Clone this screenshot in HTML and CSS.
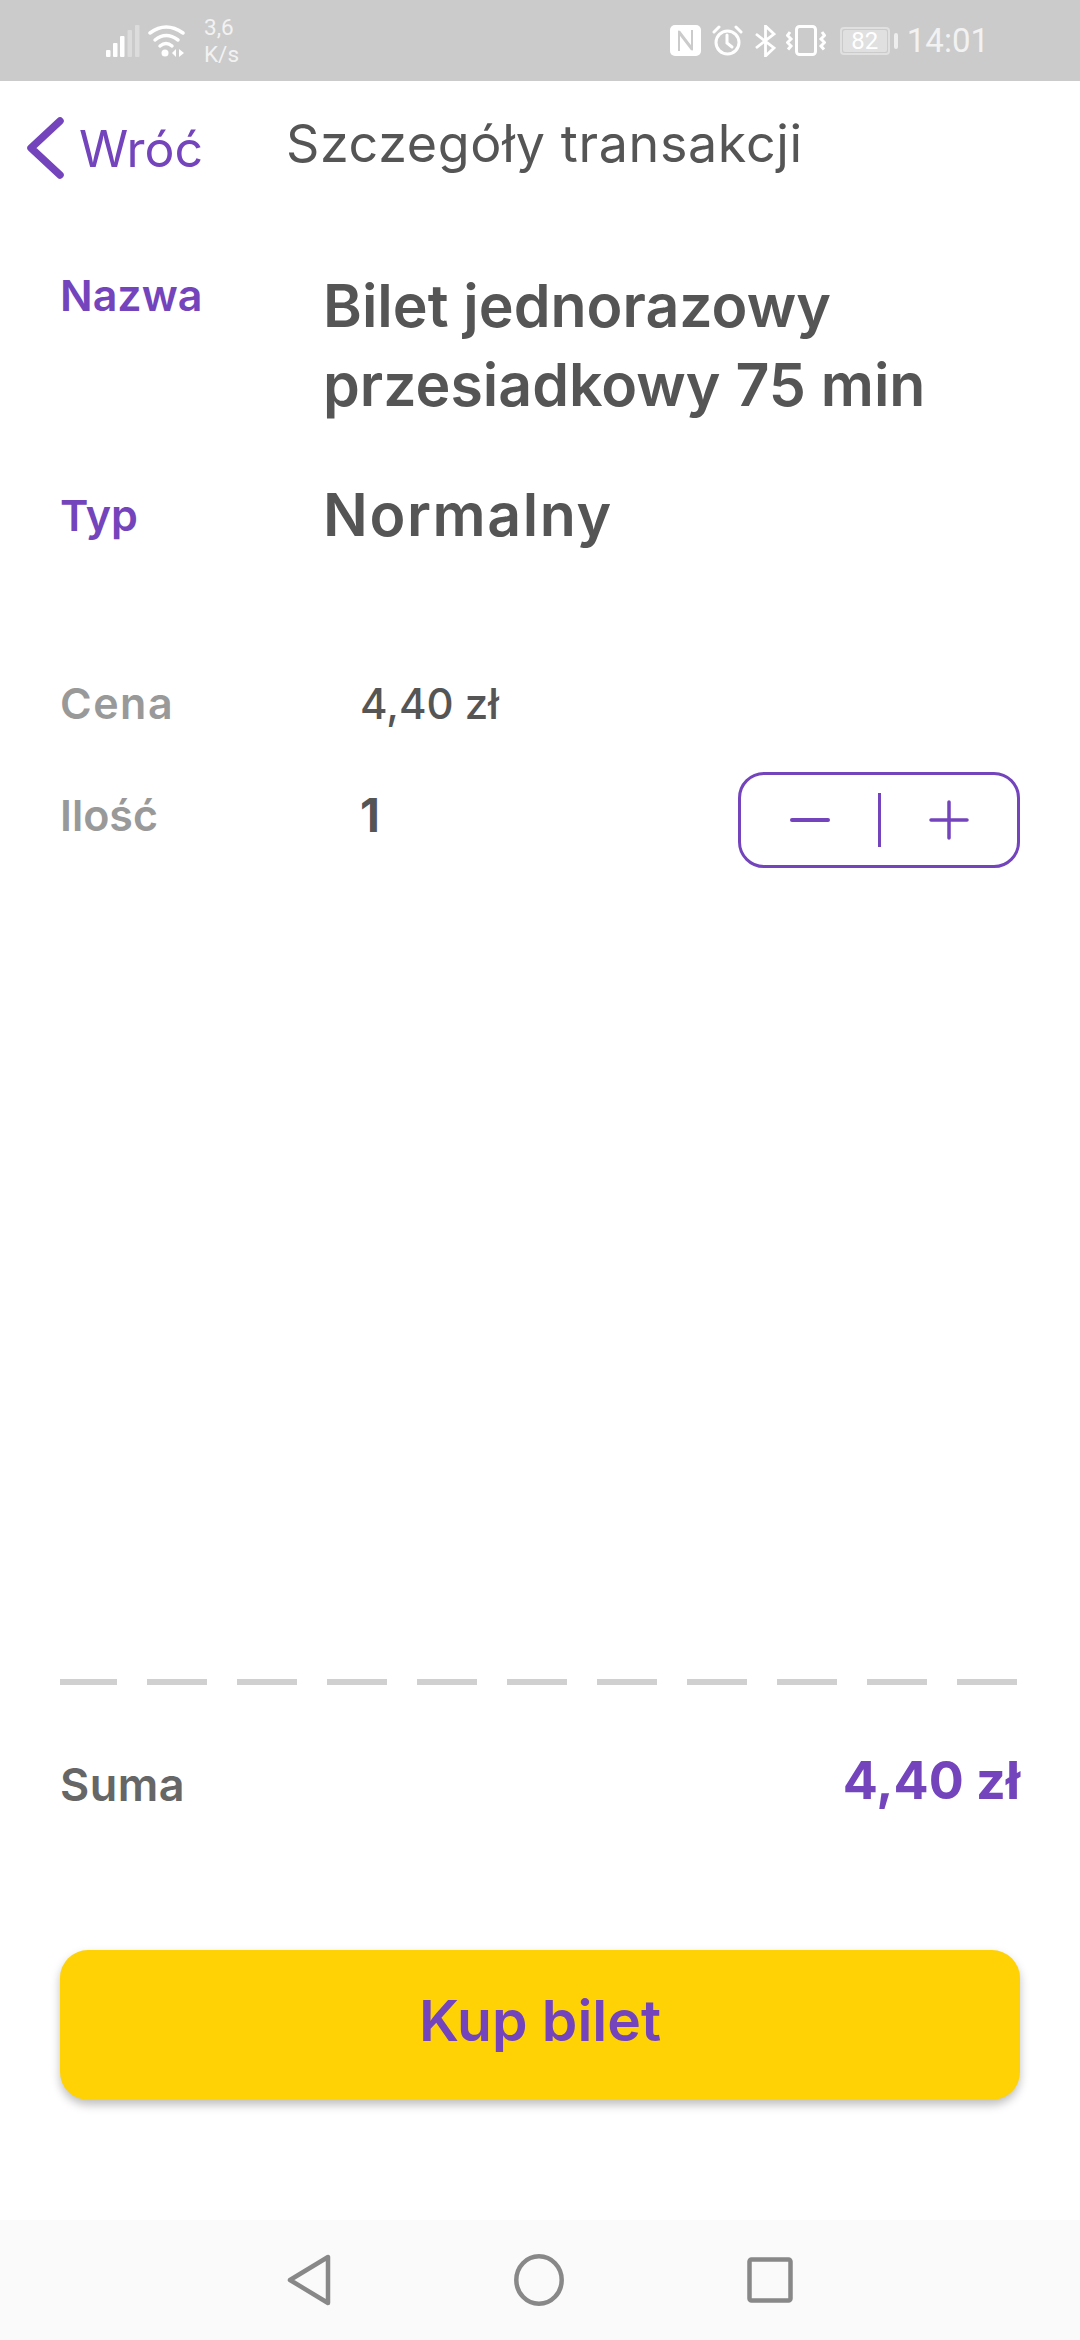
FILE: index.html
```html
<!DOCTYPE html>
<html lang="pl">
<head>
    <meta charset="UTF-8">
    <meta name="viewport" content="width=device-width, initial-scale=1.0">
    <title>Szczegóły transakcji</title>
    <link rel="stylesheet" href="styles.css">
</head>
<body>
    <div class="status-bar">
        <div class="status-left">
            <svg width="34" height="32" viewBox="0 0 34 32">
                <rect x="0" y="25" width="4.500" height="7" rx="1" fill="#fff"/>
                <rect x="7" y="18" width="4.500" height="14" rx="1" fill="#fff"/>
                <rect x="14" y="11" width="4.500" height="21" rx="1" fill="#fff"/>
                <rect x="21.500" y="5" width="4.500" height="27" rx="1" fill="#dcdcdc"/>
                <rect x="29" y="0" width="4.500" height="32" rx="1" fill="#dcdcdc"/>
            </svg>
            <svg width="38" height="32" viewBox="0 0 38 32" fill="none" stroke="#fff" stroke-width="3.500" stroke-linecap="round">
                <path d="M2 8 Q18 -4 35 8"/>
                <path d="M7 15 Q18 6 30 15"/>
                <path d="M12 21 Q18 16 24 21"/>
                <circle cx="17" cy="28" r="3.500" fill="#fff" stroke="none"/>
                <path d="M28 24 L24 28 L28 32 Z M31 24 L36 28 L31 32 Z" fill="#fff" stroke="none"/>
            </svg>
            <div class="net-speed"><span>3,6</span><span>K/s</span></div>
        </div>
        <div class="status-right">
            <svg width="31" height="31" viewBox="0 0 31 31">
                <rect width="31" height="31" rx="5" fill="#fff"/>
                <path d="M9 26 V8 L22 25 M22 5 V23 L9 6" fill="none" stroke="#cbcbcb" stroke-width="2"/>
            </svg>
            <svg class="icon-alarm" width="31" height="31" viewBox="0 0 31 31" fill="none" stroke="#fff" stroke-width="3" stroke-linecap="round">
                <circle cx="15.500" cy="17.500" r="11.500"/>
                <path d="M15 10 V18 L20 22"/>
                <path d="M2 7 L7 2 M29 7 L24 2"/>
            </svg>
            <svg width="21" height="32" viewBox="0 0 21 32" fill="none" stroke="#fff" stroke-width="2.800">
                <path d="M1 9 L19 23 L10.500 31 V1 L19 9 L1 23"/>
            </svg>
            <svg class="icon-vibrate" width="40" height="31" viewBox="0 0 40 31" fill="none" stroke="#fff" stroke-width="3">
                <rect x="10.500" y="1.500" width="19" height="28" rx="3"/>
                <path d="M4 7 L1.500 10.500 L5 14 L1.500 17.500 L5 21 L2 24.500"/>
                <path d="M36 7 L38.500 10.500 L35 14 L38.500 17.500 L35 21 L38 24.500"/>
            </svg>
            <div class="battery">
                <div class="battery-body"><div class="battery-fill">82</div></div>
                <div class="battery-tip"></div>
            </div>
            <span class="clock">14:01</span>
        </div>
    </div>

    <div class="nav-bar">
        <div class="back">
            <svg width="37" height="62" viewBox="0 0 37 62" fill="none" stroke="#7444bd" stroke-width="7.500" stroke-linecap="round" stroke-linejoin="round">
                <path d="M33 4 L4 31 L33 58"/>
            </svg>
            <span>Wróć</span>
        </div>
        <h1>Szczegóły transakcji</h1>
    </div>

    <main class="content">
        <div class="info-row info-name">
            <div class="info-label">Nazwa</div>
            <div class="info-value">Bilet jednorazowy przesiadkowy 75 min</div>
        </div>
        <div class="info-row info-type">
            <div class="info-label">Typ</div>
            <div class="info-value">Normalny</div>
        </div>

        <div class="price-row">
            <div class="price-label">Cena</div>
            <div class="price-value">4,40 zł</div>
        </div>
        <div class="qty-row">
            <div class="price-label">Ilość</div>
            <div class="qty-value">1</div>
            <div class="stepper">
                <svg width="40" height="4" viewBox="0 0 40 4"><rect width="40" height="4" rx="2" fill="#7444bd"/></svg>
                <div class="stepper-line"></div>
                <svg width="40" height="40" viewBox="0 0 40 40" fill="none" stroke="#7444bd" stroke-width="3.500" stroke-linecap="round">
                    <path d="M2 20 H38 M20 2 V38"/>
                </svg>
            </div>
        </div>

        <div class="spacer"></div>

        <div class="dashes"></div>
        <div class="total-row">
            <div class="total-label">Suma</div>
            <div class="total-value">4,40 zł</div>
        </div>
        <button class="buy-btn">Kup bilet</button>
    </main>

    <div class="system-nav">
        <svg width="44" height="52" viewBox="0 0 44 52" fill="none" stroke="#888" stroke-width="4.500" stroke-linejoin="round">
            <path d="M41 3 V49 L3 26 Z"/>
        </svg>
        <svg width="50" height="52" viewBox="0 0 50 52" fill="none" stroke="#888" stroke-width="4.500">
            <ellipse cx="25" cy="26" rx="22.700" ry="23.700"/>
        </svg>
        <svg width="46" height="46" viewBox="0 0 46 46" fill="none" stroke="#888" stroke-width="4.500" stroke-linejoin="round">
            <rect x="2.500" y="2.500" width="41" height="41" rx="2"/>
        </svg>
    </div>
</body>
</html>
```

FILE: styles.css
```css
:root {
    --purple: #7444bd;
    --dark: #555555;
    --muted: #999999;
    --yellow: #ffd205;
}

* {
    box-sizing: border-box;
}

body {
    margin: 0;
    height: 2340px;
    display: flex;
    flex-direction: column;
    background: #fff;
    color: var(--dark);
    font-family: Inter, "Noto Sans", sans-serif;
}

.status-bar {
    height: 81px;
    flex-shrink: 0;
    background: #cbcbcb;
    color: #f2f2f2;
    display: flex;
    justify-content: space-between;
    align-items: center;
    padding: 0 91px 0 106px;
}

.status-left,
.status-right {
    display: flex;
    align-items: center;
}

.status-left {
    gap: 8px;
}

.net-speed {
    display: flex;
    flex-direction: column;
    font-size: 22.500px;
    line-height: 27px;
    margin-left: 10px;
    font-family: Roboto, sans-serif;
}

.status-right {
    gap: 12px;
}

.icon-alarm {
    margin-left: -1px;
}

.icon-vibrate {
    margin-left: -2px;
}

.battery {
    display: flex;
    align-items: center;
    margin-left: 2px;
    gap: 4px;
}

.battery-body {
    width: 50px;
    height: 28px;
    border: 2px solid #e0e0e0;
    border-radius: 4px;
    padding: 1px;
}

.battery-fill {
    width: 44px;
    height: 22px;
    background: #e0e0e0;
    border-radius: 2px;
    color: #fff;
    font-size: 24px;
    line-height: 22px;
    text-align: center;
    font-family: Roboto, sans-serif;
}

.battery-tip {
    width: 4px;
    height: 16px;
    background: #eee;
    border-radius: 2px;
}

.clock {
    font-family: Roboto, sans-serif;
    font-size: 33px;
    margin-left: -3px;
}

.nav-bar {
    height: 128px;
    flex-shrink: 0;
    display: flex;
    align-items: center;
    padding-left: 27px;
}

.back {
    display: flex;
    align-items: center;
    gap: 15px;
    width: 259px;
    color: var(--purple);
    font-size: 50px;
    font-weight: 400;
    padding-top: 8px;
}

.back svg {
    flex-shrink: 0;
    margin-top: -3px;
}

.nav-bar h1 {
    margin: -3px 0 0;
    font-size: 52px;
    font-weight: 400;
    letter-spacing: 0.650px;
    color: var(--dark);
}

.content {
    flex: 1;
    display: flex;
    flex-direction: column;
    padding: 0 60px;
}

.info-row {
    display: flex;
}

.info-name {
    margin-top: 57px;
}

.info-type {
    margin-top: 51px;
    align-items: center;
}

.info-label {
    width: 263px;
    flex-shrink: 0;
    color: var(--purple);
    font-size: 43px;
    font-weight: 600;
    line-height: 50px;
}

.info-name .info-label {
    padding-top: 4px;
}

.info-value {
    font-size: 59px;
    font-weight: 600;
    line-height: 79px;
}

.info-type .info-value {
    letter-spacing: 1.600px;
}

.price-row,
.qty-row {
    display: flex;
    align-items: center;
}

.price-row {
    margin-top: 123px;
}

.qty-row {
    margin-top: 43px;
}

.price-label {
    width: 300px;
    color: var(--muted);
    font-size: 43px;
    font-weight: 600;
    letter-spacing: 1.500px;
}

.price-value {
    font-size: 42px;
    font-weight: 500;
}

.qty-row .price-label {
    letter-spacing: 0;
}

.qty-row .price-label,
.qty-value {
    margin-bottom: 10px;
}

.qty-value {
    flex: 1;
    font-size: 46px;
    font-weight: 700;
}

.stepper {
    width: 282px;
    height: 96px;
    border: 3px solid var(--purple);
    border-radius: 26px;
    display: flex;
    align-items: center;
    justify-content: space-between;
    padding: 0 48px 0 49px;
}

.stepper-line {
    width: 3px;
    height: 54px;
    background: var(--purple);
}

.spacer {
    flex: 1;
}

.dashes {
    height: 6px;
    background: linear-gradient(90deg, #d0d0d0 60px, transparent 60px) -3px 0 / 90px 100% repeat-x;
}

.total-row {
    display: flex;
    justify-content: space-between;
    align-items: flex-end;
    height: 63px;
    margin-top: 64px;
}

.total-label {
    font-size: 45px;
    font-weight: 600;
    letter-spacing: 0.500px;
    color: #666;
}

.total-value {
    font-size: 52px;
    line-height: 63px;
    font-weight: 700;
    color: var(--purple);
}

.buy-btn {
    height: 150px;
    margin: 138px 0 120px;
    padding: 0 0 10px;
    border: none;
    border-radius: 28px;
    background: var(--yellow);
    box-shadow: 0 5px 10px rgba(0, 0, 0, 0.25);
    color: var(--purple);
    font-family: inherit;
    font-size: 57px;
    font-weight: 600;
}

.system-nav {
    height: 120px;
    flex-shrink: 0;
    background: #fafafa;
    display: flex;
    justify-content: center;
    align-items: center;
    gap: 183px;
}
```
